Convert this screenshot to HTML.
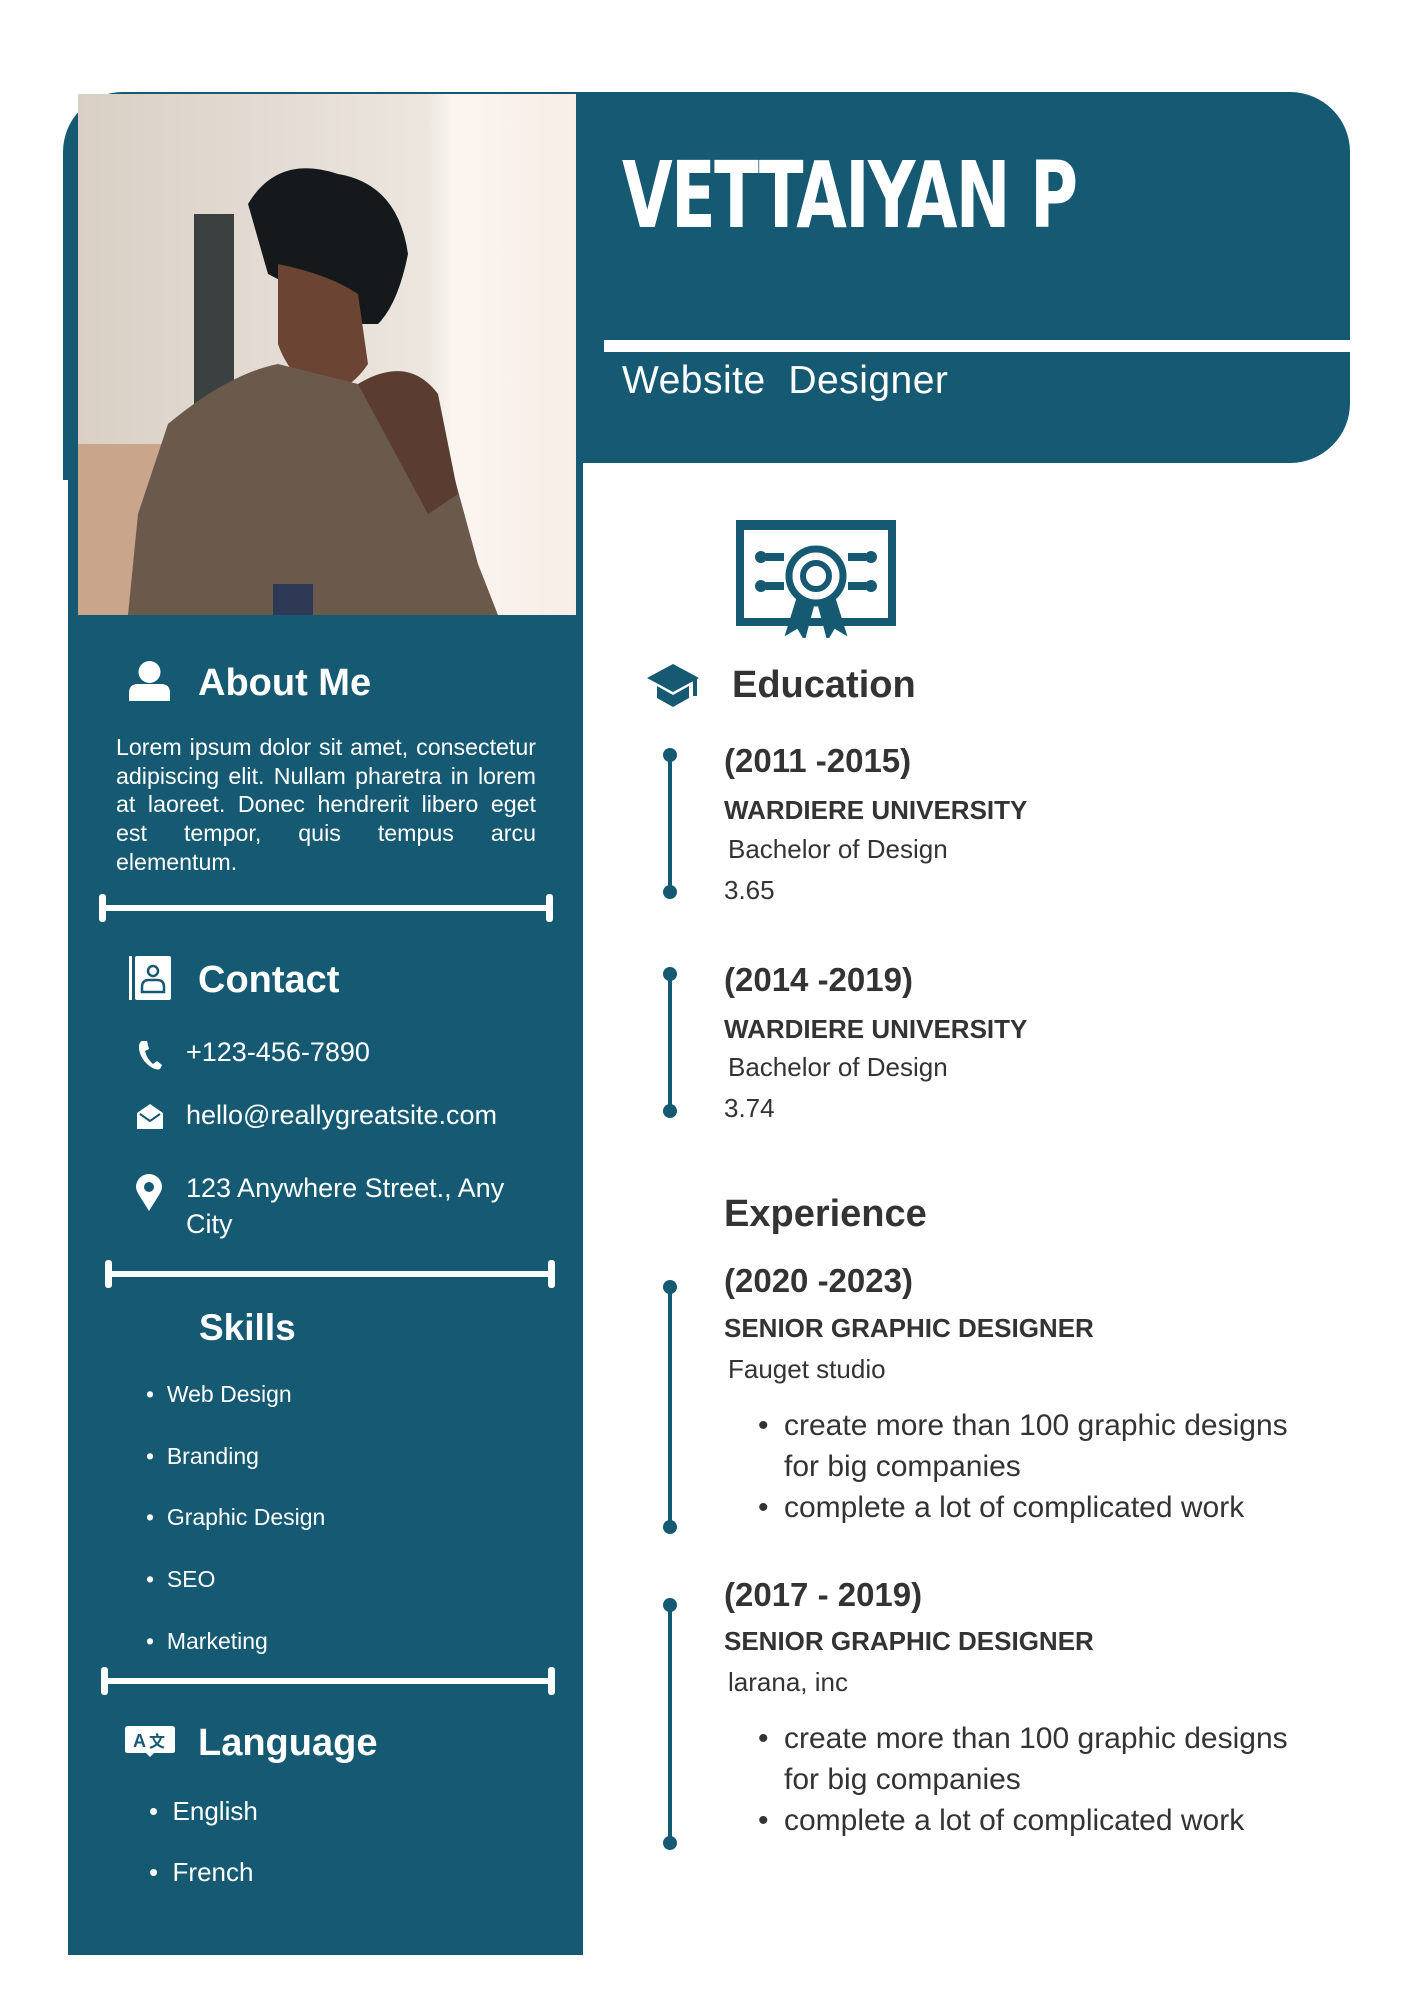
<!DOCTYPE html>
<html><head><meta charset="utf-8"><style>
*{margin:0;padding:0;box-sizing:border-box}
body{width:1414px;height:2000px;background:#fff;position:relative;overflow:hidden;font-family:"Liberation Sans",sans-serif}
.a{position:absolute;white-space:nowrap;line-height:1}
.w{color:#fff}.d{color:#333}
.b{font-weight:bold}
.dv{position:absolute;height:6px;background:#fff;border-radius:3px}
.dv:before,.dv:after{content:"";position:absolute;top:-11px;width:7px;height:28px;background:#fff;border-radius:3px}
.dv:before{left:-2px}.dv:after{right:-2px}
.tl{position:absolute;left:668px;width:4px;background:#155a72}
.tl:before,.tl:after{content:"";position:absolute;left:-5px;width:14px;height:14px;border-radius:50%;background:#155a72}
.tl:before{top:-7px}.tl:after{bottom:-7px}
.ul{position:absolute;list-style:none;color:#333;font-size:30px;line-height:41px;white-space:nowrap}
.ul li{position:relative;padding-left:26px}
.ul li:before{content:"•";position:absolute;left:0}
</style></head><body>
<div style="position:absolute;left:63px;top:92px;width:1287px;height:371px;background:#155a72;border-radius:60px"></div>
<div style="position:absolute;left:63px;top:380px;width:520px;height:100px;background:#155a72"></div>
<div style="position:absolute;left:68px;top:440px;width:515px;height:1515px;background:#155a72"></div>
<div style="position:absolute;left:583px;top:463px;width:20px;height:20px;background:#fff"></div>
<div style="position:absolute;left:604px;top:340px;width:746px;height:12px;background:#fff"></div>
<svg style="position:absolute;left:78px;top:94px" width="498" height="521" viewBox="0 0 498 521">
<defs><linearGradient id="bg" x1="0" x2="1"><stop offset="0" stop-color="#d9cfc5"/><stop offset=".7" stop-color="#ece6df"/><stop offset=".75" stop-color="#fbf5f0"/><stop offset="1" stop-color="#f7ede6"/></linearGradient></defs>
<rect width="498" height="521" fill="url(#bg)"/>
<rect x="116" y="120" width="40" height="270" fill="#3b4040"/>
<rect x="0" y="350" width="90" height="171" fill="#c9a58c"/>
<path d="M170 110 Q200 60 260 80 Q320 90 330 160 Q320 210 300 230 L270 230 Q230 200 190 180 Z" fill="#15191c"/>
<path d="M200 170 Q250 180 280 200 L290 270 Q270 300 240 300 Q210 280 200 250 Z" fill="#6b4433"/>
<path d="M90 330 Q150 280 200 270 L280 290 Q330 310 370 360 L400 470 L420 521 L50 521 L60 420 Z" fill="#6b5a4c"/>
<path d="M280 290 Q330 260 360 300 L380 400 L350 420 Z" fill="#5a3d30"/>
<rect x="195" y="490" width="40" height="31" fill="#2e3a55"/>
</svg>
<div class="a w b" style="left:622px;top:150px;font-size:92px;letter-spacing:-2px;transform:scaleX(.79);transform-origin:left;font-family:'DejaVu Sans Condensed','Liberation Sans',sans-serif">VETTAIYAN P</div>
<div class="a w" style="left:622px;top:361px;font-size:39px;letter-spacing:.5px">Website&nbsp; Designer</div>
<svg style="position:absolute;left:736px;top:520px" width="160" height="118" viewBox="0 0 160 118">
<rect x="4" y="4" width="152" height="98" fill="none" stroke="#155a72" stroke-width="8"/>
<rect x="0" y="0" width="160" height="10" fill="#155a72"/>
<circle cx="80" cy="56" r="27" fill="none" stroke="#155a72" stroke-width="7"/>
<circle cx="80" cy="56" r="13" fill="none" stroke="#155a72" stroke-width="6"/>
<path d="M62 80 L52 112 L62 106 L68 116 L76 86 M98 80 L108 112 L98 106 L92 116 L84 86" fill="#155a72" stroke="#155a72" stroke-width="4"/>
<circle cx="25" cy="37" r="6" fill="#155a72"/><circle cx="25" cy="66" r="6" fill="#155a72"/>
<circle cx="135" cy="37" r="6" fill="#155a72"/><circle cx="135" cy="66" r="6" fill="#155a72"/>
<rect x="30" y="33" width="18" height="8" fill="#155a72"/><rect x="30" y="62" width="18" height="8" fill="#155a72"/>
<rect x="112" y="33" width="18" height="8" fill="#155a72"/><rect x="112" y="62" width="18" height="8" fill="#155a72"/>
</svg>
<svg style="position:absolute;left:645px;top:662px" width="56" height="46" viewBox="0 0 56 46">
<path d="M28 2 L54 16 L28 30 L2 16 Z" fill="#155a72"/>
<path d="M12 24 L12 36 L28 45 L44 36 L44 24 L28 33 Z" fill="#155a72"/>
<rect x="48" y="16" width="4" height="18" fill="#155a72"/>
</svg>
<div class="a d b" style="left:732px;top:666px;font-size:38px">Education</div>
<div class="tl" style="top:755px;height:137px"></div>
<div class="a d b" style="left:724px;top:744px;font-size:33px">(2011 -2015)</div>
<div class="a d b" style="left:724px;top:797px;font-size:26px">WARDIERE UNIVERSITY</div>
<div class="a d" style="left:728px;top:836px;font-size:26px">Bachelor of Design</div>
<div class="a d" style="left:724px;top:877px;font-size:26px">3.65</div>
<div class="tl" style="top:974px;height:137px"></div>
<div class="a d b" style="left:724px;top:963px;font-size:33px">(2014 -2019)</div>
<div class="a d b" style="left:724px;top:1016px;font-size:26px">WARDIERE UNIVERSITY</div>
<div class="a d" style="left:728px;top:1054px;font-size:26px">Bachelor of Design</div>
<div class="a d" style="left:724px;top:1095px;font-size:26px">3.74</div>
<div class="a d b" style="left:724px;top:1195px;font-size:38px">Experience</div>
<div class="tl" style="top:1287px;height:240px"></div>
<div class="a d b" style="left:724px;top:1264px;font-size:33px">(2020 -2023)</div>
<div class="a d b" style="left:724px;top:1315px;font-size:26px">SENIOR GRAPHIC DESIGNER</div>
<div class="a d" style="left:728px;top:1356px;font-size:26px">Fauget studio</div>
<ul class="ul" style="left:758px;top:1405px"><li>create more than 100 graphic designs<br>for big companies</li><li>complete a lot of complicated work</li></ul>
<div class="tl" style="top:1605px;height:238px"></div>
<div class="a d b" style="left:724px;top:1578px;font-size:33px">(2017 - 2019)</div>
<div class="a d b" style="left:724px;top:1628px;font-size:26px">SENIOR GRAPHIC DESIGNER</div>
<div class="a d" style="left:728px;top:1669px;font-size:26px">larana, inc</div>
<ul class="ul" style="left:758px;top:1718px"><li>create more than 100 graphic designs<br>for big companies</li><li>complete a lot of complicated work</li></ul>
<svg style="position:absolute;left:129px;top:661px" width="41" height="40" viewBox="0 0 41 40">
<circle cx="20.5" cy="11" r="11" fill="#fff"/><path d="M0 40 L0 32 Q0 23 9 23 L32 23 Q41 23 41 32 L41 40 Z" fill="#fff"/></svg>
<div class="a w b" style="left:198px;top:664px;font-size:38px">About Me</div>
<div class="w" style="position:absolute;left:116px;top:733px;width:420px;font-size:23.2px;line-height:28.7px;text-align:justify;text-align-last:left">Lorem ipsum dolor sit amet, consectetur adipiscing elit. Nullam pharetra in lorem at laoreet. Donec hendrerit libero eget est tempor, quis tempus arcu elementum.</div>
<div class="dv" style="left:101px;top:905px;width:450px"></div>
<svg style="position:absolute;left:129px;top:956px" width="42" height="44" viewBox="0 0 42 44">
<rect x="0" y="0" width="3" height="44" fill="#fff"/><rect x="6" y="0" width="36" height="44" rx="2" fill="#fff"/>
<circle cx="24" cy="15" r="5" fill="none" stroke="#155a72" stroke-width="2.5"/>
<path d="M13 36 L13 31 Q13 24 20 24 L28 24 Q35 24 35 31 L35 36 Z" fill="none" stroke="#155a72" stroke-width="2.5"/></svg>
<div class="a w b" style="left:198px;top:961px;font-size:38px">Contact</div>
<svg style="position:absolute;left:137px;top:1040px" width="26" height="30" viewBox="0 0 26 30"><path d="M5 1 L10 1 L12 9 L8 11 Q10 19 16 24 L20 21 L25 25 L23 29 Q18 31 10 24 Q2 16 2 7 Q2 2 5 1 Z" fill="#fff"/></svg>
<div class="a w" style="left:186px;top:1039px;font-size:27px">+123-456-7890</div>
<svg style="position:absolute;left:136px;top:1102px" width="28" height="28" viewBox="0 0 28 28"><path d="M1 11 L14 2 L27 11 L27 27 L1 27 Z" fill="#fff"/><path d="M4 12 L14 19 L24 12" fill="none" stroke="#155a72" stroke-width="2"/></svg>
<div class="a w" style="left:186px;top:1102px;font-size:27px">hello@reallygreatsite.com</div>
<svg style="position:absolute;left:136px;top:1174px" width="26" height="38" viewBox="0 0 26 38"><path d="M13 37 L3 21 Q0 16 0 13 A13 13 0 0 1 26 13 Q26 16 23 21 Z" fill="#fff"/><circle cx="13" cy="13" r="5" fill="#155a72"/></svg>
<div class="a w" style="left:186px;top:1170px;font-size:27px;line-height:36px">123 Anywhere Street., Any<br>City</div>
<div class="dv" style="left:107px;top:1271px;width:446px"></div>
<div class="a w b" style="left:199px;top:1309px;font-size:37px">Skills</div>
<div class="a w" style="left:146px;top:1364px;font-size:23px;line-height:61.7px">•&nbsp; Web Design<br>•&nbsp; Branding<br>•&nbsp; Graphic Design<br>•&nbsp; SEO<br>•&nbsp; Marketing</div>
<div class="dv" style="left:103px;top:1678px;width:450px"></div>
<svg style="position:absolute;left:125px;top:1726px" width="50" height="32" viewBox="0 0 50 32"><path d="M3 0 L47 0 Q50 0 50 3 L50 25 Q50 27 47 27 L29 27 L25 31 L21 27 L3 27 Q0 27 0 25 L0 3 Q0 0 3 0 Z" fill="#fff"/>
<text x="8" y="21" font-family="Liberation Sans" font-weight="bold" font-size="18" fill="#155a72">A</text><text x="24" y="21" font-family="Noto Sans CJK SC,sans-serif" font-weight="bold" font-size="16" fill="#155a72">文</text></svg>
<div class="a w b" style="left:198px;top:1724px;font-size:38px">Language</div>
<div class="a w" style="left:149px;top:1781px;font-size:26px;line-height:61px">•&nbsp; English<br>•&nbsp; French</div>
</body></html>
